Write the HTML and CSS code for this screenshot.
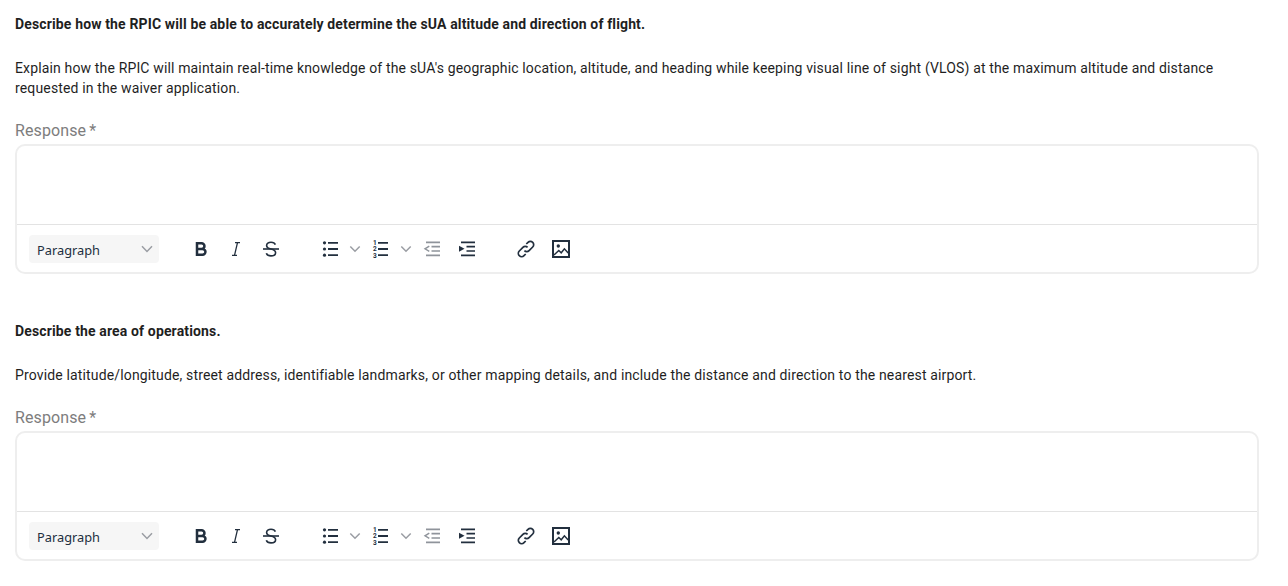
FILE: index.html
```html
<!DOCTYPE html>
<html>
  <head>
    <meta charset="utf-8">
    <title>Waiver questions</title>
    <link rel="stylesheet" href="styles.css">
  </head>
  <body>
    <svg class="sprite" width="0" height="0">
      <symbol id="i-chev-sel" viewBox="0 0 12 8"><path d="M1 1.200 6 6.400l5-5.200" fill="none" stroke="currentColor" stroke-width="1.500"/></symbol>
      <symbol id="i-chev" viewBox="0 0 18 18"><path d="M4.300 6.400 9 11.200l4.700-4.800" fill="none" stroke="currentColor" stroke-width="1.500"/></symbol>
      <symbol id="i-bold" viewBox="0 0 18 18"><path d="M4 3.200h4.600a2.850 2.850 0 0 1 0 5.700H4zM4 8.900h5.500a2.950 2.950 0 0 1 0 5.900H4z" fill="none" stroke="currentColor" stroke-width="2.500"/></symbol>
      <symbol id="i-italic" viewBox="0 0 18 18"><path d="M8 2.700h5M5 15.300h5M10.500 2.700 7.500 15.300" fill="none" stroke="currentColor" stroke-width="1.300"/></symbol>
      <symbol id="i-strike" viewBox="0 0 18 18"><path d="M1 9h16" stroke="currentColor" stroke-width="1.600"/><path d="M13.400 4.600C12.800 3 11.100 2.200 9 2.200 6.500 2.200 4.600 3.500 4.600 5.500c0 1.900 1.700 2.900 4.400 3.600 3 .8 4.600 1.800 4.600 3.600 0 2-2 3.200-4.600 3.200-2.300 0-4.100-1-4.700-2.700" fill="none" stroke="currentColor" stroke-width="1.600"/></symbol>
      <symbol id="i-ul" viewBox="0 0 18 18"><circle cx="2.500" cy="2.800" r="1.600" fill="currentColor"/><circle cx="2.500" cy="9" r="1.600" fill="currentColor"/><circle cx="2.500" cy="15.200" r="1.600" fill="currentColor"/><path d="M6 2.800h10M6 9h10M6 15.200h10" stroke="currentColor" stroke-width="1.800"/></symbol>
      <symbol id="i-outdent" viewBox="0 0 18 18"><path d="M3 2.300h14M8.500 6.700H17M8.500 11H17M3 15.300h14" stroke="currentColor" stroke-width="1.700"/><path d="M6.300 6.200 2 8.800l4.300 2.600" fill="none" stroke="currentColor" stroke-width="1.400"/></symbol>
      <symbol id="i-indent" viewBox="0 0 18 18"><path d="M3 2.300h14M8.500 6.700H17M8.500 11H17M3 15.300h14" stroke="currentColor" stroke-width="1.700"/><path d="M1 5.800 6.500 8.800 1 11.800z" fill="currentColor"/></symbol>
      <symbol id="i-link" viewBox="0 0 18 18"><path d="M7.400 10.600a3.300 3.300 0 0 0 4.700 0l3.600-3.600a3.300 3.300 0 0 0-4.700-4.700L9.300 4" fill="none" stroke="currentColor" stroke-width="1.700"/><path d="M10.600 7.400a3.300 3.300 0 0 0-4.700 0l-3.600 3.600a3.300 3.300 0 0 0 4.700 4.700L8.700 14" fill="none" stroke="currentColor" stroke-width="1.700"/></symbol>
      <symbol id="i-image" viewBox="0 0 18 18"><rect x="1" y="1" width="16" height="16" fill="none" stroke="currentColor" stroke-width="2"/><circle cx="6.300" cy="6" r="1.700" fill="currentColor"/><path d="M2 15 6.800 10.500l2.400 2.300 3.200-4 3.800 4.200" fill="none" stroke="currentColor" stroke-width="1.500"/></symbol>
    </svg>

    <section class="question">
      <h3 class="q-title">Describe how the RPIC will be able to accurately determine the sUA altitude and direction of flight.</h3>
      <p class="q-desc">Explain how the RPIC will maintain real-time knowledge of the sUA's geographic location, altitude, and heading while keeping visual line of sight (VLOS) at the maximum altitude and distance requested in the waiver application.</p>
      <div class="label">Response <span class="star">*</span></div>
      <div class="editor">
        <div class="editor-body"></div>
        <div class="toolbar">
          <div class="select">Paragraph <svg class="chev-sel"><use href="#i-chev-sel"/></svg></div>
          <svg class="ic bold"><use href="#i-bold"/></svg>
          <svg class="ic italic"><use href="#i-italic"/></svg>
          <svg class="ic strike"><use href="#i-strike"/></svg>
          <svg class="ic ul"><use href="#i-ul"/></svg>
          <svg class="ic chev"><use href="#i-chev"/></svg>
          <svg class="ic ol" viewBox="0 0 18 18"><text x="1" y="5" class="num">1</text><text x="1" y="11.300" class="num">2</text><text x="1" y="17.500" class="num">3</text><path d="M6 2.800h10M6 9h10M6 15.200h10" stroke="currentColor" stroke-width="1.800"/></svg>
          <svg class="ic chev"><use href="#i-chev"/></svg>
          <svg class="ic outdent"><use href="#i-outdent"/></svg>
          <svg class="ic indent"><use href="#i-indent"/></svg>
          <svg class="ic link"><use href="#i-link"/></svg>
          <svg class="ic image"><use href="#i-image"/></svg>
        </div>
      </div>
    </section>

    <section class="question">
      <h3 class="q-title">Describe the area of operations.</h3>
      <p class="q-desc">Provide latitude/longitude, street address, identifiable landmarks, or other mapping details, and include the distance and direction to the nearest airport.</p>
      <div class="label">Response <span class="star">*</span></div>
      <div class="editor">
        <div class="editor-body"></div>
        <div class="toolbar">
          <div class="select">Paragraph <svg class="chev-sel"><use href="#i-chev-sel"/></svg></div>
          <svg class="ic bold"><use href="#i-bold"/></svg>
          <svg class="ic italic"><use href="#i-italic"/></svg>
          <svg class="ic strike"><use href="#i-strike"/></svg>
          <svg class="ic ul"><use href="#i-ul"/></svg>
          <svg class="ic chev"><use href="#i-chev"/></svg>
          <svg class="ic ol" viewBox="0 0 18 18"><text x="1" y="5" class="num">1</text><text x="1" y="11.300" class="num">2</text><text x="1" y="17.500" class="num">3</text><path d="M6 2.800h10M6 9h10M6 15.200h10" stroke="currentColor" stroke-width="1.800"/></svg>
          <svg class="ic chev"><use href="#i-chev"/></svg>
          <svg class="ic outdent"><use href="#i-outdent"/></svg>
          <svg class="ic indent"><use href="#i-indent"/></svg>
          <svg class="ic link"><use href="#i-link"/></svg>
          <svg class="ic image"><use href="#i-image"/></svg>
        </div>
      </div>
    </section>
  </body>
</html>
```

FILE: styles.css
```css
body {
  margin: 0;
  padding: 14px 29px 0 15px;
  background-color: white;
  font-family: Roboto, "Liberation Sans", sans-serif;
  color: #1f1f1f;
}
.sprite {
  display: block;
  height: 0;
}
.question {
  margin-bottom: 47px;
}
.q-title {
  margin: 0 0 24px 0;
  font-size: 14px;
  line-height: 20px;
  font-weight: 700;
  letter-spacing: 0.14px;
}
.q-desc {
  margin: 0 0 20px 0;
  font-size: 14px;
  line-height: 20px;
  letter-spacing: 0.148px;
}
.label {
  font-size: 16px;
  line-height: 24px;
  letter-spacing: 0.1px;
  color: #7d7d7d;
  padding-top: 1px;
  margin-bottom: 1px;
}
.star {
  margin-left: -1px;
}
.editor {
  height: 130px;
  box-sizing: border-box;
  border: 2px solid #eeeeee;
  border-radius: 10px;
}
.editor-body {
  height: 79px;
  box-sizing: border-box;
  border-bottom: 1px solid #e3e3e3;
}
.toolbar {
  display: flex;
  align-items: center;
  height: 47px;
  box-sizing: border-box;
  padding: 10px 0 9px 12px;
  color: #222f3e;
}
.select {
  display: flex;
  align-items: center;
  justify-content: space-between;
  width: 130px;
  height: 28px;
  box-sizing: border-box;
  padding: 1px 6px 0 8px;
  background-color: #f6f6f6;
  border-radius: 4px;
  font-family: "Noto Sans", sans-serif;
  font-size: 12.800px;
}
.chev-sel {
  width: 12px;
  height: 8px;
  margin-top: -1px;
  color: #9a9da3;
}
.ic {
  display: block;
  flex: none;
  width: 18px;
  height: 18px;
}
.num {
  font-family: Roboto, sans-serif;
  font-size: 6.500px;
  font-weight: 700;
  fill: currentColor;
}
.bold {
  margin-left: 34px;
}
.italic {
  margin-left: 16px;
}
.strike {
  margin-left: 17px;
}
.ul {
  margin-left: 42px;
}
.chev {
  margin-left: 6px;
  color: #9a9da3;
}
.ol {
  margin-left: 8px;
}
.ol + .chev {
  margin-left: 7px;
}
.outdent {
  margin-left: 8px;
  color: #8f949b;
}
.indent {
  margin-left: 17px;
}
.link {
  margin-left: 41px;
}
.image {
  margin-left: 17px;
}
```
